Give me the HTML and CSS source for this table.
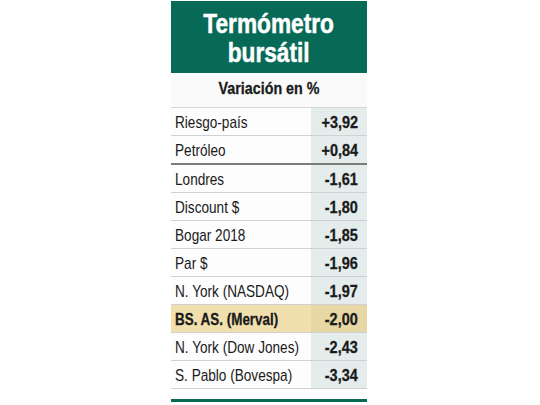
FILE: index.html
```html
<!DOCTYPE html>
<html>
<head>
<meta charset="utf-8">
<meta name="viewport" content="width=device-width, initial-scale=1">
<title>Termómetro bursátil</title>
<link rel="stylesheet" href="styles.css">
</head>
<body>
<div class="thermo">
<header class="title">
<h1>Termómetro<br>bursátil</h1>
</header>
<h2 class="subtitle"><span>Variación en %</span></h2>
<ol class="rows">
<li class="row"><span class="name"><span>Riesgo-país</span></span><b class="value"><span>+3,92</span></b></li>
<li class="row split"><span class="name"><span>Petróleo</span></span><b class="value"><span>+0,84</span></b></li>
<li class="row"><span class="name"><span>Londres</span></span><b class="value"><span>-1,61</span></b></li>
<li class="row"><span class="name"><span>Discount $</span></span><b class="value"><span>-1,80</span></b></li>
<li class="row"><span class="name"><span>Bogar 2018</span></span><b class="value"><span>-1,85</span></b></li>
<li class="row"><span class="name"><span>Par $</span></span><b class="value"><span>-1,96</span></b></li>
<li class="row"><span class="name"><span>N. York (NASDAQ)</span></span><b class="value"><span>-1,97</span></b></li>
<li class="row local"><span class="name"><span>BS. AS. (Merval)</span></span><b class="value"><span>-2,00</span></b></li>
<li class="row"><span class="name"><span>N. York (Dow Jones)</span></span><b class="value"><span>-2,43</span></b></li>
<li class="row"><span class="name"><span>S. Pablo (Bovespa)</span></span><b class="value"><span>-3,34</span></b></li>
</ol>
<div class="foot"></div>
</div>
</body>
</html>
```

FILE: styles.css
```css
body{margin:0;background:#fff;font-family:"Liberation Sans",Arial,sans-serif;color:#1a1a1a;}
.thermo{width:196px;margin:1px 0 0 171px;}
.title{background:#066a57;height:72px;display:flex;align-items:center;justify-content:center;}
.title h1{margin:2px 0 0;color:#fff;font-size:28px;line-height:29px;text-align:center;font-weight:bold;transform:scaleX(0.81);-webkit-text-stroke:0.5px #fff;}
.subtitle{margin:0;height:34px;line-height:32px;text-align:center;font-size:17px;font-weight:bold;background:#f9faf9;border-bottom:1px solid #d4d8d6;-webkit-text-stroke:0.3px #1a1a1a;}
.subtitle span{display:inline-block;transform:scaleX(0.84);}
.rows{margin:0;padding:0;}
.row{list-style:none;display:flex;height:27px;border-bottom:1px solid #cfd2d1;background:#fdfdfd;}
.row.split{border-bottom:2px solid #7a7d7c;}
.name{flex:1;min-width:0;padding-left:4px;font-size:17px;line-height:29px;white-space:nowrap;}
.name span{display:inline-block;transform:scaleX(0.8);transform-origin:left center;}
.value{flex:none;width:47px;padding-right:9px;text-align:right;font-size:17px;line-height:29px;background:#e4ecec;white-space:nowrap;-webkit-text-stroke:0.3px #1a1a1a;}
.value span{display:inline-block;transform:scaleX(0.85);transform-origin:right center;}
.local{background:#f1dfae;}
.local .name{font-weight:bold;-webkit-text-stroke:0.3px #1a1a1a;}
.local .name span{transform:scaleX(0.79);}
.local .value{background:#e7d7a4;}
.foot{height:3px;margin-top:10px;background:#066a57;}
```
